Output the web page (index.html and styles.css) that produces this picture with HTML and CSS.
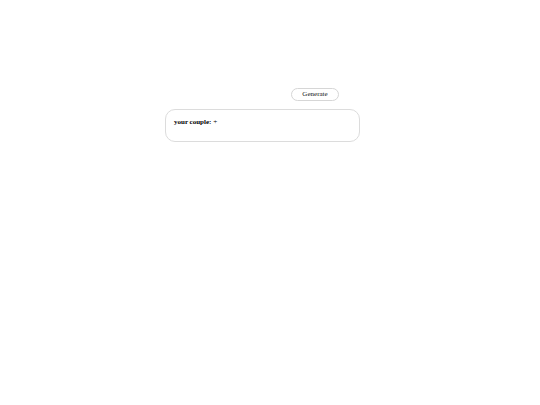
FILE: index.html
```html
<!DOCTYPE html>
<html>
<head>
<meta charset="utf-8">
<link rel="stylesheet" href="styles.css">
</head>
<body>
<div class="wrap">
  <div class="actions"><button class="gen">Generate</button></div>
  <div class="card"><span class="label">your couple:</span> +</div>
</div>
</body>
</html>
```
FILE: styles.css
```css
html, body { margin: 0; padding: 0; background: #fff; }
body { font-family: "Liberation Serif", "Times New Roman", serif; color: #000; }
.wrap { padding: 88px 0 0 165px; width: 195px; display: flex; flex-direction: column; }
.actions { display: flex; justify-content: flex-end; padding-right: 21px; }
.gen {
  width: 48px; height: 13px; padding: 0;
  border: 1px solid #d6d6d6; border-radius: 7px; background: #fff;
  font-family: "Liberation Serif", serif; font-size: 7px; color: #111;
  box-sizing: border-box; line-height: 11px;
}
.card {
  margin-top: 8px; height: 33px; box-sizing: border-box;
  border: 1px solid #dcdcdc; border-radius: 10px;
  padding: 8px 0 0 8px; font-size: 7px; line-height: 9px;
}
.label { font-weight: bold; }
```
